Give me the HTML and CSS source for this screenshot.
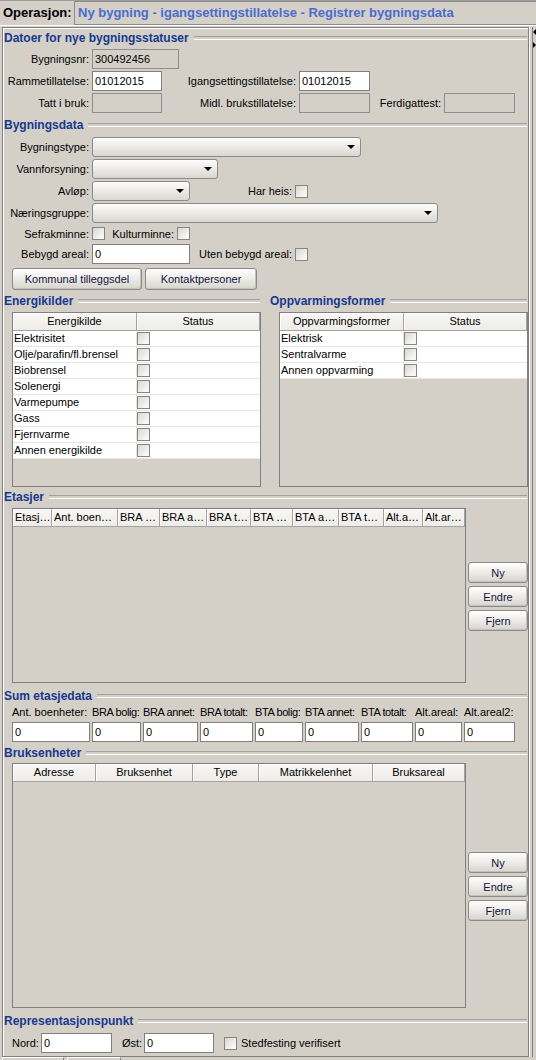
FILE: index.html
```html
<!DOCTYPE html>
<html>
<head>
<meta charset="utf-8">
<link rel="stylesheet" href="styles.css">
</head>
<body>
<div class="header">
  <div class="op-label">Operasjon:</div>
  <div class="op-field">Ny bygning - igangsettingstillatelse - Registrer bygningsdata</div>
</div>
<div class="main">
  <div class="frame">
    <div class="sec mt3">Datoer for nye bygningsstatuser</div>
    <div class="row mt4">
      <div class="lbl w86">Bygningsnr:</div>
      <div class="tf dis ml3 w87">300492456</div>
    </div>
    <div class="row mt2">
      <div class="lbl w86">Rammetillatelse:</div>
      <div class="tf ml3 w70">01012015</div>
      <div class="lbl w134">Igangsettingstillatelse:</div>
      <div class="tf ml3 w71">01012015</div>
    </div>
    <div class="row mt2">
      <div class="lbl w86">Tatt i bruk:</div>
      <div class="tf dis ml3 w70"></div>
      <div class="lbl w134">Midl. brukstillatelse:</div>
      <div class="tf dis ml3 w71"></div>
      <div class="lbl w71">Ferdigattest:</div>
      <div class="tf dis ml3 w71"></div>
    </div>

    <div class="sec mt5">Bygningsdata</div>
    <div class="row mt5">
      <div class="lbl w86">Bygningstype:</div>
      <div class="combo ml3 w269"><span class="arrow"></span></div>
    </div>
    <div class="row mt2">
      <div class="lbl w86">Vannforsyning:</div>
      <div class="combo ml3 w126"><span class="arrow"></span></div>
    </div>
    <div class="row mt2">
      <div class="lbl w86">Avløp:</div>
      <div class="combo ml3 w98"><span class="arrow"></span></div>
      <div class="lbl w102">Har heis:</div>
      <div class="cb ml3"></div>
    </div>
    <div class="row mt2">
      <div class="lbl w86">Næringsgruppe:</div>
      <div class="combo ml3 w346"><span class="arrow"></span></div>
    </div>
    <div class="row small mt2">
      <div class="lbl w86">Sefrakminne:</div>
      <div class="cb ml3"></div>
      <div class="lbl w69">Kulturminne:</div>
      <div class="cb ml3"></div>
    </div>
    <div class="row mt2">
      <div class="lbl w86">Bebygd areal:</div>
      <div class="tf ml3 w98">0</div>
      <div class="lbl w102">Uten bebygd areal:</div>
      <div class="cb ml3"></div>
    </div>
    <div class="btnrow mt4">
      <div class="btn w130">Kommunal tilleggsdel</div>
      <div class="btn w112">Kontaktpersoner</div>
    </div>

    <div class="cols mt4">
      <div class="col-left">
        <div class="sec">Energikilder</div>
        <div class="tbl etbl mt4 ml9">
          <div class="thead">
            <div class="th c124">Energikilde</div>
            <div class="th flex1">Status</div>
          </div>
          <div class="trow"><div class="td c124">Elektrisitet</div><div class="td flex1"><div class="cb"></div></div></div>
          <div class="trow"><div class="td c124">Olje/parafin/fl.brensel</div><div class="td flex1"><div class="cb"></div></div></div>
          <div class="trow"><div class="td c124">Biobrensel</div><div class="td flex1"><div class="cb"></div></div></div>
          <div class="trow"><div class="td c124">Solenergi</div><div class="td flex1"><div class="cb"></div></div></div>
          <div class="trow"><div class="td c124">Varmepumpe</div><div class="td flex1"><div class="cb"></div></div></div>
          <div class="trow"><div class="td c124">Gass</div><div class="td flex1"><div class="cb"></div></div></div>
          <div class="trow"><div class="td c124">Fjernvarme</div><div class="td flex1"><div class="cb"></div></div></div>
          <div class="trow"><div class="td c124">Annen energikilde</div><div class="td flex1"><div class="cb"></div></div></div>
        </div>
      </div>
      <div class="col-right">
        <div class="sec">Oppvarmingsformer</div>
        <div class="tbl etbl mt4 ml10">
          <div class="thead">
            <div class="th c124">Oppvarmingsformer</div>
            <div class="th flex1">Status</div>
          </div>
          <div class="trow"><div class="td c124">Elektrisk</div><div class="td flex1"><div class="cb"></div></div></div>
          <div class="trow"><div class="td c124">Sentralvarme</div><div class="td flex1"><div class="cb"></div></div></div>
          <div class="trow"><div class="td c124">Annen oppvarming</div><div class="td flex1"><div class="cb"></div></div></div>
        </div>
      </div>
    </div>

    <div class="sec mt3">Etasjer</div>
    <div class="tblrow mt4">
      <div class="tbl gtbl h175">
        <div class="thead">
          <div class="th left" style="width:39px">Etasj…</div>
          <div class="th left" style="width:66px">Ant. boen…</div>
          <div class="th left" style="width:42px">BRA …</div>
          <div class="th left" style="width:47px">BRA a…</div>
          <div class="th left" style="width:44px">BRA t…</div>
          <div class="th left" style="width:42px">BTA …</div>
          <div class="th left" style="width:46px">BTA a…</div>
          <div class="th left" style="width:45px">BTA t…</div>
          <div class="th left" style="width:39px">Alt.a…</div>
          <div class="th left flex1">Alt.ar…</div>
        </div>
      </div>
      <div class="sidebtns pt54">
        <div class="btn sb">Ny</div>
        <div class="btn sb">Endre</div>
        <div class="btn sb">Fjern</div>
      </div>
    </div>

    <div class="sec mt6">Sum etasjedata</div>
    <div class="sumgrid mt3">
      <div class="slbl">Ant. boenheter:</div>
      <div class="slbl caps">BRA bolig:</div>
      <div class="slbl caps">BRA annet:</div>
      <div class="slbl caps">BRA totalt:</div>
      <div class="slbl caps">BTA bolig:</div>
      <div class="slbl caps">BTA annet:</div>
      <div class="slbl caps">BTA totalt:</div>
      <div class="slbl">Alt.areal:</div>
      <div class="slbl">Alt.areal2:</div>
    </div>
    <div class="sumgrid mt3">
      <div class="tf">0</div>
      <div class="tf">0</div>
      <div class="tf">0</div>
      <div class="tf">0</div>
      <div class="tf">0</div>
      <div class="tf">0</div>
      <div class="tf">0</div>
      <div class="tf">0</div>
      <div class="tf">0</div>
    </div>

    <div class="sec mt4">Bruksenheter</div>
    <div class="tblrow mt3">
      <div class="tbl gtbl h245">
        <div class="thead">
          <div class="th" style="width:83px">Adresse</div>
          <div class="th" style="width:97px">Bruksenhet</div>
          <div class="th" style="width:66px">Type</div>
          <div class="th" style="width:114px">Matrikkelenhet</div>
          <div class="th flex1">Bruksareal</div>
        </div>
      </div>
      <div class="sidebtns pt89">
        <div class="btn sb">Ny</div>
        <div class="btn sb">Endre</div>
        <div class="btn sb">Fjern</div>
      </div>
    </div>

    <div class="sec mt6">Representasjonspunkt</div>
    <div class="row mt5 ml9">
      <div class="lbl w26">Nord:</div>
      <div class="tf ml3 w71">0</div>
      <div class="lbl ml10 w19">Øst:</div>
      <div class="tf ml3 w70">0</div>
      <div class="cb ml10"></div>
      <div class="plain ml4">Stedfesting verifisert</div>
    </div>
  </div>
  <div class="divider">
    <span class="tri-left"></span>
    <span class="tri-right"></span>
  </div>
</div>
<div class="tabs">
  <div class="tab t1"></div>
  <div class="tab t2"></div>
</div>
</body>
</html>
```

FILE: styles.css
```css
* { box-sizing: border-box; }
html, body { margin: 0; padding: 0; }
body {
  width: 536px;
  height: 1060px;
  overflow: hidden;
  background: #d4d0c8;
  font-family: "Liberation Sans", Arial, sans-serif;
  font-size: 11px;
  color: #000;
}

.header {
  height: 26px;
  display: flex;
  border-top: 1px solid #9c9c9c;
  border-bottom: 1px solid #ffffff;
}
.op-label {
  width: 74px;
  padding-left: 3px;
  font-weight: bold;
  font-size: 13px;
  line-height: 24px;
  white-space: nowrap;
}
.op-field {
  flex: 1;
  height: 24px;
  border: 1px solid #8c8c8c;
  border-right: none;
  padding-left: 3px;
  color: #4a6ccc;
  font-weight: bold;
  font-size: 13px;
  line-height: 22px;
  white-space: nowrap;
}

.main {
  display: flex;
  margin-top: 1px;
  height: 1030px;
}
.frame {
  width: 527px;
  margin-left: 2px;
  height: 1030px;
  border: 1px solid #808080;
  box-shadow: inset 1px 1px 0 #ffffff;
}
.divider {
  flex: 1;
  display: flex;
  flex-direction: column;
  align-items: flex-end;
  border-left: 1px solid #ffffff;
  box-shadow: inset 2px 0 0 #d4d0c8, inset 3px 0 0 #808080;
}
.tri-left {
  margin-top: 2px;
  width: 0; height: 0;
  border-top: 3px solid transparent;
  border-bottom: 3px solid transparent;
  border-right: 3px solid #000;
}
.tri-right {
  margin-top: 7px;
  width: 0; height: 0;
  border-top: 3px solid transparent;
  border-bottom: 3px solid transparent;
  border-left: 3px solid #000;
}
.tabs { display: flex; height: 3px; }
.tab {
  height: 3px;
  border-top: 1px solid #ffffff;
  border-left: 1px solid #ffffff;
  border-right: 1px solid #808080;
}
.t1 { width: 62px; margin-left: 2px; }
.t2 { width: 54px; margin-left: 3px; }

/* section titles */
.sec {
  display: flex;
  align-items: center;
  height: 14px;
  padding-left: 1px;
  font-weight: bold;
  font-size: 12px;
  color: #17398d;
  white-space: nowrap;
}
.sec::after {
  content: "";
  flex: 1;
  height: 2px;
  border-top: 1px solid #a0a0a0;
  border-bottom: 1px solid #ffffff;
  margin-left: 5px;
  margin-right: 1px;
}

/* spacing helpers */
.mt2 { margin-top: 2px; }
.mt3 { margin-top: 3px; }
.mt4 { margin-top: 4px; }
.mt5 { margin-top: 5px; }
.mt6 { margin-top: 6px; }
.ml3 { margin-left: 3px; }
.ml4 { margin-left: 4px; }
.ml9 { margin-left: 9px; }
.ml10 { margin-left: 10px; }
.pt54 { padding-top: 54px; }
.pt89 { padding-top: 89px; }

.w19 { width: 19px; }
.w26 { width: 26px; }
.w69 { width: 69px; }
.w70 { width: 70px; }
.w71 { width: 71px; }
.w86 { width: 86px; }
.w87 { width: 87px; }
.w98 { width: 98px; }
.w102 { width: 102px; }
.w112 { width: 112px; }
.w126 { width: 126px; }
.w130 { width: 130px; }
.w134 { width: 134px; }
.w269 { width: 269px; }
.w346 { width: 346px; }

.row {
  display: flex;
  align-items: center;
  height: 20px;
}
.row.small { height: 17px; }
.lbl {
  flex: none;
  text-align: right;
  white-space: nowrap;
}
.plain { white-space: nowrap; }

.tf {
  flex: none;
  height: 20px;
  border: 1px solid #7f7f7f;
  background: #ffffff;
  padding-left: 2px;
  line-height: 18px;
  white-space: nowrap;
  overflow: hidden;
}
.tf.dis {
  background: #d4d0c8;
  border-color: #8e8e8e;
}

.combo {
  flex: none;
  height: 20px;
  border: 1px solid #8a8a8a;
  border-radius: 3px;
  background: linear-gradient(#fdfdfc, #ebe9e5 55%, #d9d6cf);
  display: flex;
  align-items: center;
  justify-content: flex-end;
  padding-right: 5px;
}
.arrow {
  width: 0; height: 0;
  border-left: 4px solid transparent;
  border-right: 4px solid transparent;
  border-top: 4px solid #000;
}

.cb {
  flex: none;
  width: 13px;
  height: 13px;
  border: 1px solid #858585;
  background: linear-gradient(135deg, #d9d6cf, #f7f7f5 80%);
}

.btnrow {
  display: flex;
  gap: 3px;
  margin-left: 9px;
}
.btn {
  flex: none;
  height: 22px;
  border: 1px solid #8b8b8b;
  border-radius: 3px;
  background: linear-gradient(#fefefe, #ecebe7 50%, #d7d4cd);
  box-shadow: inset -1px -1px 0 #c4c1ba;
  display: flex;
  align-items: center;
  justify-content: center;
  color: #14143c;
  white-space: nowrap;
}

/* tables */
.cols { display: flex; }
.col-left { width: 258px; }
.col-right { flex: 1; margin-left: 8px; }
.tbl {
  border: 1px solid #808080;
  background: #d4d0c8;
  overflow: hidden;
}
.etbl { width: 249px; height: 175px; }
.gtbl { width: 454px; }
.h175 { height: 175px; }
.h245 { height: 245px; }
.thead {
  display: flex;
  height: 18px;
}
.th {
  flex: none;
  height: 18px;
  border-right: 1px solid #a3a3a3;
  border-bottom: 1px solid #a3a3a3;
  box-shadow: inset 1px 1px 0 #ffffff;
  background: linear-gradient(#f8f7f5, #eeece8);
  text-align: center;
  line-height: 17px;
  white-space: nowrap;
  overflow: hidden;
}
.th.left { text-align: left; padding-left: 2px; }
.flex1 { flex: 1; }
.c124 { width: 124px; flex: none; }
.trow {
  display: flex;
  height: 16px;
  background: #ffffff;
  border-bottom: 1px solid #e6e6e6;
}
.td {
  height: 15px;
  padding-left: 1px;
  line-height: 15px;
  white-space: nowrap;
}
.td.c124 { border-right: 1px solid #e6e6e6; }
.td.flex1 { padding-left: 0; padding-top: 1px; }

.tblrow {
  display: flex;
  margin-left: 9px;
}
.sidebtns {
  display: flex;
  flex-direction: column;
  gap: 3px;
  margin-left: 2px;
}
.btn.sb { width: 60px; height: 21px; }

.sumgrid {
  display: grid;
  grid-template-columns: 78px 49px 55px 53px 48px 54px 52px 47px 51px;
  column-gap: 2px;
  margin-left: 9px;
}
.slbl {
  height: 13px;
  line-height: 13px;
  white-space: nowrap;
}
.slbl.caps { letter-spacing: -0.4px; }
```
